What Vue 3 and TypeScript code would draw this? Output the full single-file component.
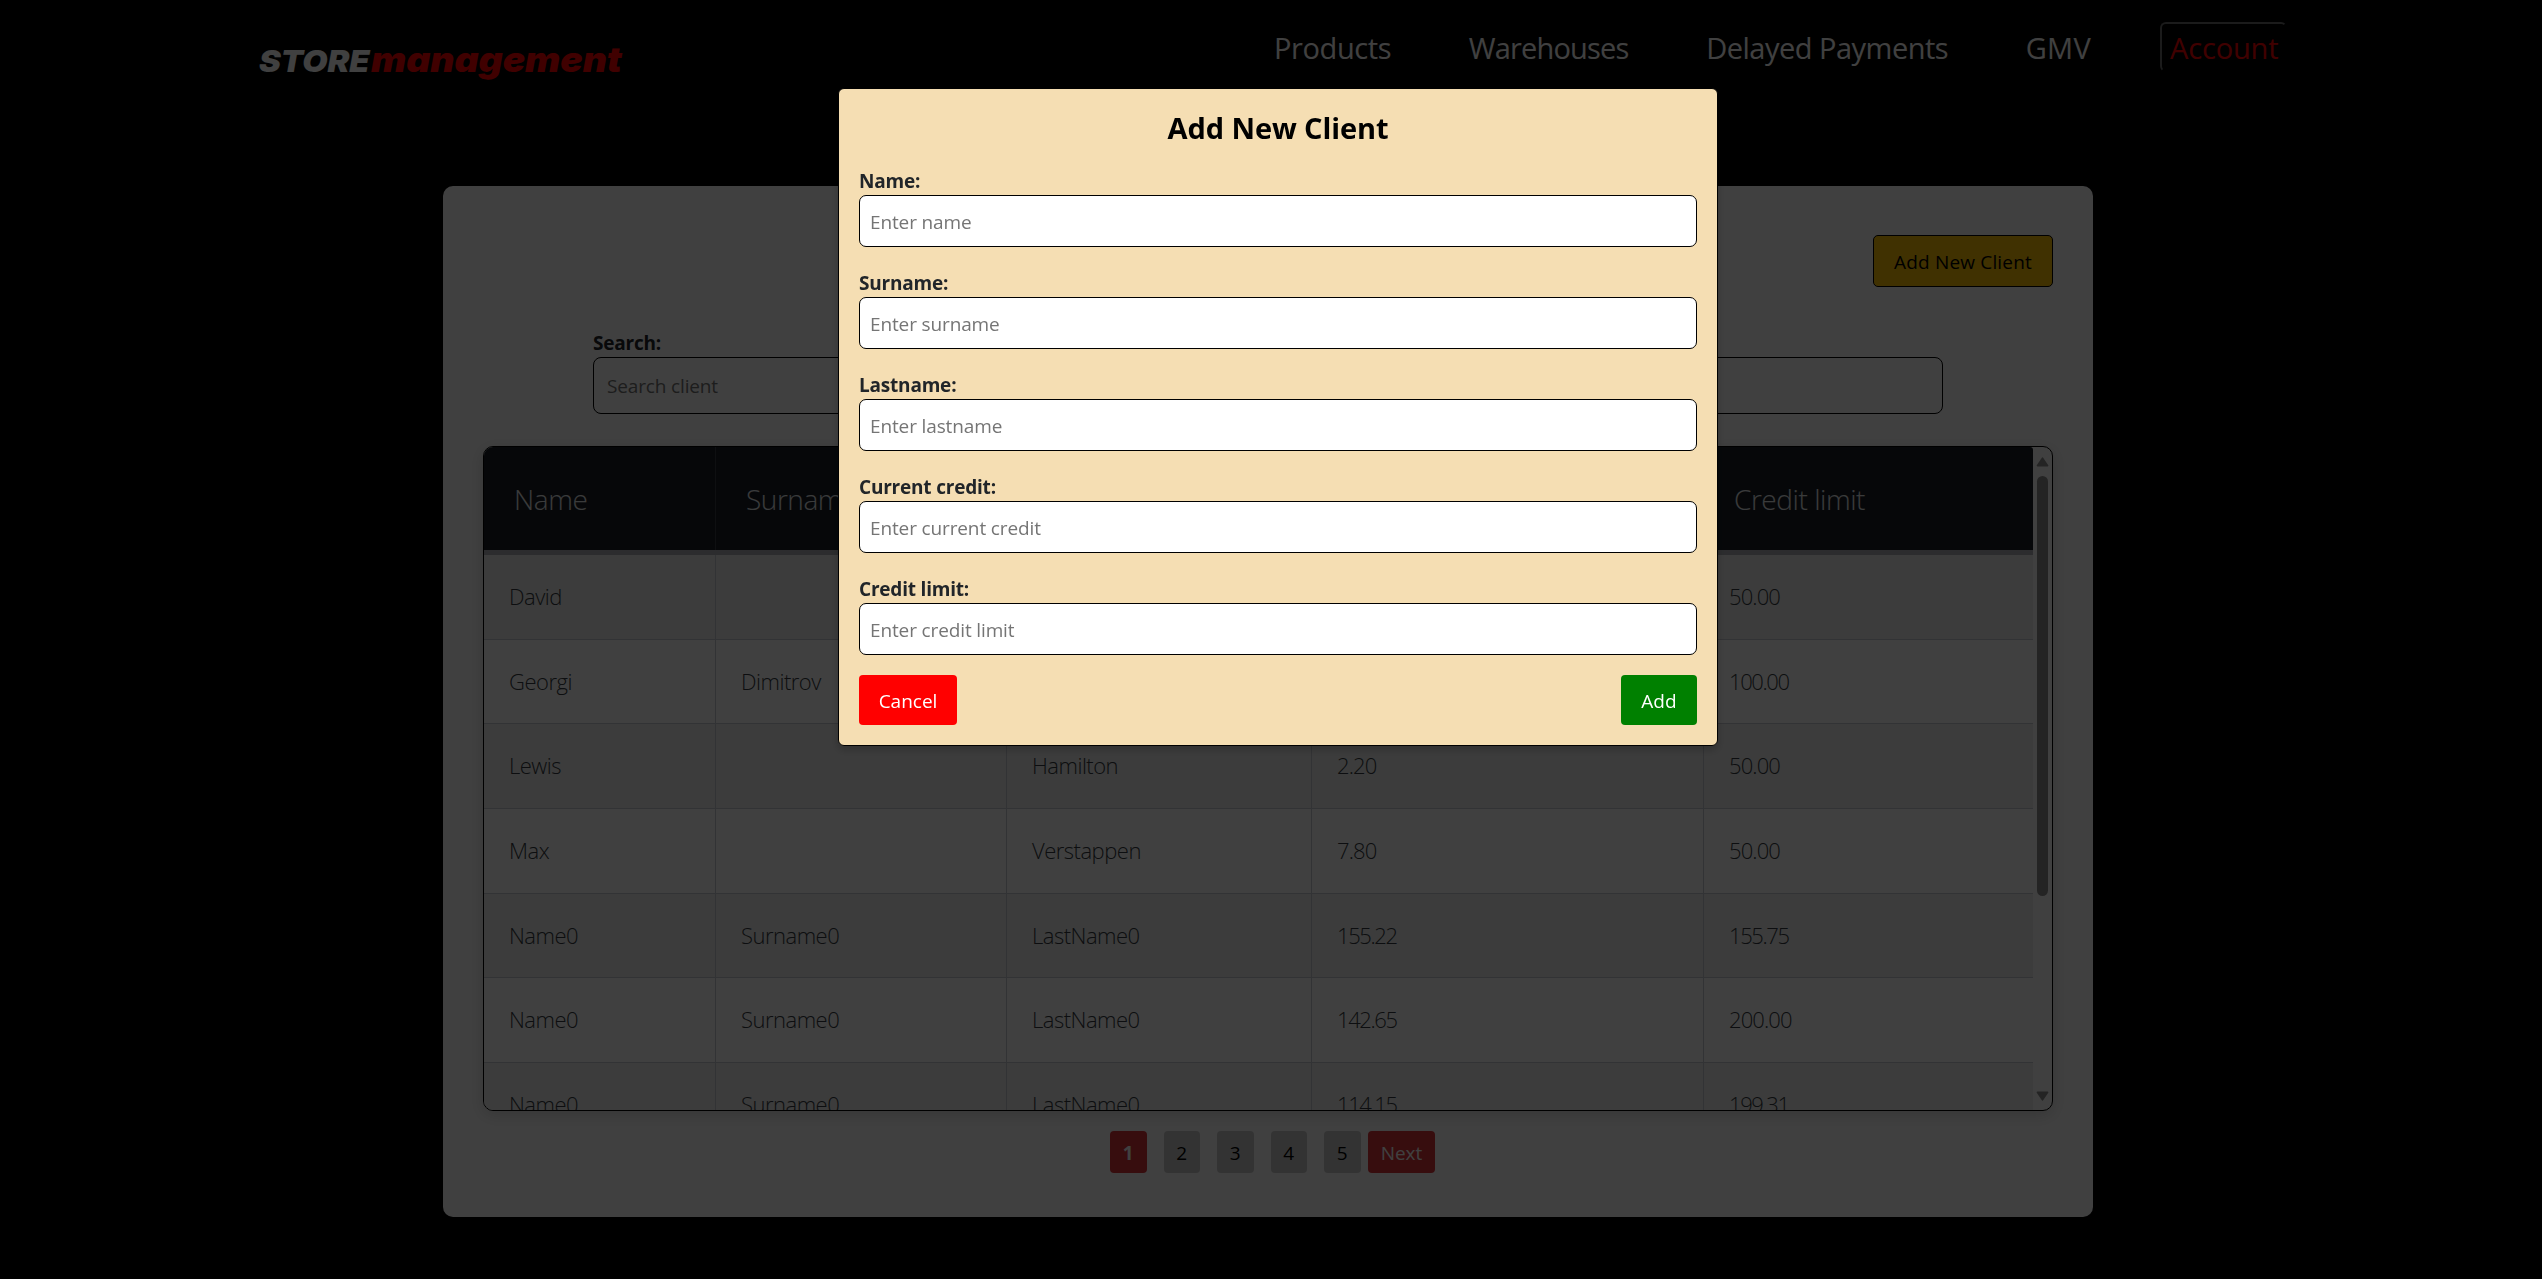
<script setup lang="ts">
interface NavItem { label: string; tracking: number; active?: boolean }
interface Field { id: string; label: string; placeholder: string }

const nav: NavItem[] = [
  { label: 'Products', tracking: -0.4 },
  { label: 'Warehouses', tracking: -0.8 },
  { label: 'Delayed Payments', tracking: -0.5 },
  { label: 'GMV', tracking: 0.3 },
  { label: 'Account', tracking: -0.15, active: true },
]

const columns = ['Name', 'Surname', 'Lastname', 'Current credit', 'Credit limit']

const clients: string[][] = [
  ['David', '', 'Davidov', '1.10', '50.00'],
  ['Georgi', 'Dimitrov', 'Georgiev', '20.00', '100.00'],
  ['Lewis', '', 'Hamilton', '2.20', '50.00'],
  ['Max', '', 'Verstappen', '7.80', '50.00'],
  ['Name0', 'Surname0', 'LastName0', '155.22', '155.75'],
  ['Name0', 'Surname0', 'LastName0', '142.65', '200.00'],
  ['Name0', 'Surname0', 'LastName0', '114.15', '199.31'],
]

const fields: Field[] = [
  { id: 'name', label: 'Name:', placeholder: 'Enter name' },
  { id: 'surname', label: 'Surname:', placeholder: 'Enter surname' },
  { id: 'lastname', label: 'Lastname:', placeholder: 'Enter lastname' },
  { id: 'current', label: 'Current credit:', placeholder: 'Enter current credit' },
  { id: 'limit', label: 'Credit limit:', placeholder: 'Enter credit limit' },
]

const pages = [1, 2, 3, 4, 5]

function cellClass(text: string): string {
  if (/^1\d\d/.test(text)) return 'cell num-tight'
  return /^\d/.test(text) ? 'cell num' : 'cell'
}
</script>

<template>
  <div class="page">
    <header class="topbar">
      <div class="logo"><span class="store">STORE</span><span class="management">management</span></div>
      <nav class="nav">
        <a
          v-for="item in nav"
          :key="item.label"
          :class="['nav-link', { active: item.active }]"
          :style="{ letterSpacing: item.tracking + 'px' }"
        >{{ item.label }}</a>
      </nav>
    </header>

    <main class="panel">
      <div class="toolbar">
        <button class="open-btn">Add New Client</button>
      </div>

      <div class="search">
        <label for="search" class="label">Search:</label>
        <input id="search" class="search-input" placeholder="Search client" />
      </div>

      <div class="table-box">
        <div class="table">
          <div class="row head">
            <div v-for="c in columns" :key="c" class="th">{{ c }}</div>
          </div>
          <div v-for="(r, i) in clients" :key="i" class="row body">
            <div v-for="(t, j) in r" :key="j" :class="cellClass(t)">{{ t }}</div>
          </div>
        </div>
        <div class="scrollbar">
          <svg width="13" height="10" viewBox="0 0 13 10"><path d="M6.5 1.2 L11.6 8.6 H1.4 Z" fill="#909090" stroke="#909090" stroke-width="1.6" stroke-linejoin="round" /></svg>
          <div class="thumb"></div>
          <svg width="13" height="10" viewBox="0 0 13 10"><path d="M6.5 8.8 L11.6 1.4 H1.4 Z" fill="#909090" stroke="#909090" stroke-width="1.6" stroke-linejoin="round" /></svg>
        </div>
      </div>

      <div class="pagination">
        <button v-for="p in pages" :key="p" :class="['page-btn', { current: p === 1 }]">{{ p }}</button>
        <button class="next-btn">Next</button>
      </div>
    </main>

    <div class="overlay">
      <form class="modal" @submit.prevent>
        <h2 class="title">Add New Client</h2>
        <div v-for="f in fields" :key="f.id" class="field">
          <label :for="f.id" class="label">{{ f.label }}</label>
          <input :id="f.id" class="input" :placeholder="f.placeholder" />
        </div>
        <div class="actions">
          <button type="button" class="cancel">Cancel</button>
          <button type="submit" class="add">Add</button>
        </div>
      </form>
    </div>
  </div>
</template>

<style>
body {
  background: #000;
  overflow: hidden;
}
</style>

<style scoped>
.page,
.page * {
  box-sizing: border-box;
}
.page {
  height: 1279px;
  overflow: hidden;
  background: #000;
  font-family: 'Open Sans', 'Noto Sans', sans-serif;
  font-size: 19px;
  color: #212529;
}
button,
input {
  font: inherit;
  margin: 0;
}
.topbar {
  display: flex;
  justify-content: space-between;
  height: 186px;
  padding: 22px 255px 0 259px;
}
.logo {
  display: flex;
  align-items: baseline;
  height: 66px;
  line-height: 66px;
  padding-top: 4px;
  font-family: Inter, 'Liberation Sans', sans-serif;
  font-weight: 900;
  font-style: italic;
}
.store {
  width: 112px;
  font-size: 30px;
  color: #fff;
  transform: scaleX(1.09);
  transform-origin: left;
}
.management {
  font-size: 35px;
  color: #f00;
  transform: scaleX(1.065);
  transform-origin: left;
}
.nav {
  display: flex;
  gap: 57.5px;
}
.nav-link {
  height: 50px;
  padding: 2px 8px 0;
  border: 2px solid transparent;
  line-height: 43px;
  font-size: 29px;
  color: #fff;
  white-space: nowrap;
}
.nav-link.active {
  width: 127px;
  margin-left: 1.5px;
  color: #f00;
  border-color: #6c6c6c #000 #000 #6c6c6c;
  border-radius: 6px;
}
.panel {
  width: 1650px;
  height: 1031px;
  margin-left: 443px;
  padding: 49px 40px 0;
  background: #fff;
  border-radius: 10px;
}
.toolbar {
  display: flex;
  justify-content: flex-end;
}
.open-btn {
  width: 180px;
  height: 52px;
  padding: 1px 0 0;
  background: #ffc107;
  border: 1px solid #000;
  border-radius: 5px;
  color: #000;
  letter-spacing: 0.17px;
}
.search {
  width: 1350px;
  margin: 42px 0 32px 110px;
}
.label {
  display: block;
  line-height: 28px;
  font-weight: 700;
  letter-spacing: -0.2px;
}
.search-input {
  display: block;
  width: 100%;
  height: 57px;
  padding: 0 13px;
  border: 1px solid #000;
  border-radius: 8px;
  background: #fff;
  letter-spacing: -0.15px;
}
input::placeholder {
  color: #757575;
  opacity: 1;
}
.table-box {
  display: flex;
  height: 665px;
  border: 1px solid #000;
  border-radius: 10px;
  overflow: hidden;
  box-shadow: 0 4px 16px rgba(0, 0, 0, 0.16);
}
.table {
  width: 1549px;
  height: 663px;
  overflow: hidden;
}
.row {
  display: grid;
  grid-template-columns: 232px 291px 305px 392px 329px;
}
.head {
  height: 108px;
  border-bottom: 5px solid #aeb1b6;
  border-top-right-radius: 3px;
  background: #181f27;
}
.th {
  padding-left: 30px;
  line-height: 105px;
  height: 103px;
  font-size: 28px;
  font-weight: 300;
  letter-spacing: -0.45px;
  color: #e6e9ec;
  border-right: 1px solid #383f46;
}
.body {
  height: 84.7px;
  border-bottom: 1px solid #c8cad2;
  background: #fff;
}
.body:nth-child(even) {
  background: #eeeeee;
}
.cell {
  padding-left: 25px;
  line-height: 83.7px;
  font-size: 22px;
  font-weight: 300;
  letter-spacing: -0.5px;
  color: #343a40;
  border-right: 1px solid #c8cad2;
}
.th:last-child,
.cell:last-child {
  border-right: 0;
}
.num {
  letter-spacing: -0.9px;
}
.num-tight {
  letter-spacing: -1.4px;
}
.scrollbar {
  display: flex;
  flex-direction: column;
  align-items: center;
  width: 19px;
  padding: 10px 0 9px;
}
.scrollbar svg {
  display: block;
}
.thumb {
  width: 11px;
  height: 420px;
  margin: 9px 0 auto;
  border-radius: 6px;
  background: #909090;
}
.pagination {
  display: flex;
  gap: 17px;
  margin: 20px 0 0 627px;
}
.page-btn,
.next-btn {
  width: 36.5px;
  height: 42px;
  padding: 1px 0 0;
  border: 0;
  border-radius: 4px;
  background: #ccc;
  color: #000;
}
.current,
.next-btn {
  background: #d9343a;
  color: #fff;
}
.current {
  font-weight: 700;
}
.next-btn {
  width: 67px;
  margin-left: -9.5px;
}
.overlay {
  position: fixed;
  inset: 0;
  padding: 88px 0 0 838px;
  background: rgba(0, 0, 0, 0.75);
}
.modal {
  width: 880px;
  height: 658px;
  padding: 20px;
  background: #f5deb3;
  border: 1px solid #000;
  border-radius: 6px;
  box-shadow: 0 4px 8px rgba(0, 0, 0, 0.2);
}
.title {
  margin: 0 0 20px;
  line-height: 38px;
  text-align: center;
  font-size: 29px;
  font-weight: 700;
  letter-spacing: -0.1px;
  color: #000;
}
.field {
  margin-bottom: 22px;
}
.input {
  display: block;
  width: 100%;
  height: 52px;
  padding: 1px 10px 0;
  border: 1px solid #000;
  border-radius: 7px;
  background: #fff;
  letter-spacing: -0.13px;
}
.actions {
  display: flex;
  justify-content: space-between;
  margin-top: -2px;
}
.cancel,
.add {
  height: 50px;
  padding: 1px 0 0;
  border: 0;
  border-radius: 4px;
  color: #fff;
}
.cancel {
  width: 98px;
  background: #f00;
}
.add {
  width: 76px;
  background: #008000;
}
</style>
